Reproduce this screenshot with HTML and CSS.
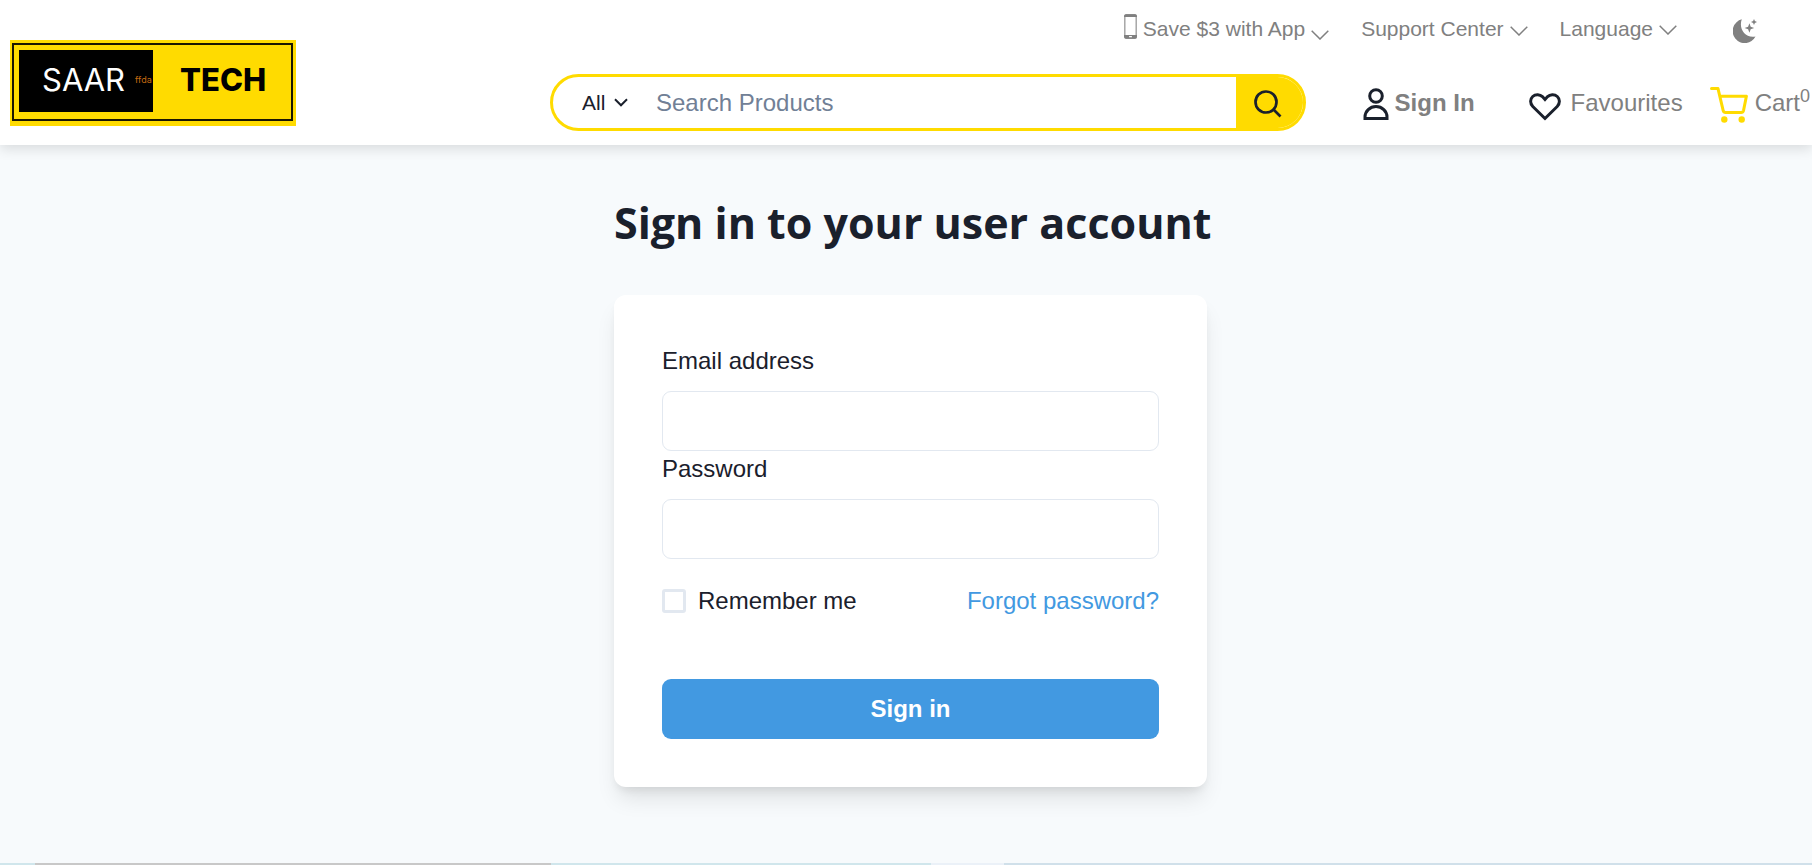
FILE: index.html
```html
<!DOCTYPE html>
<html lang="en">
<head>
<meta charset="utf-8">
<meta name="viewport" content="width=device-width, initial-scale=1">
<title>Saar Tech - Sign in</title>
<link rel="stylesheet" href="styles.css">
</head>
<body>
<header class="header">
  <a class="logo" href="#" aria-label="Saar Tech">
    <span class="logo-frame">
      <span class="logo-saar">SAAR<small class="logo-note">ffda</small></span>
      <span class="logo-tech">TECH</span>
    </span>
  </a>
  <div class="header-content">
    <nav class="top-nav" aria-label="Help">
      <a class="top-link" href="#">
        <svg class="icon-phone" width="13" height="25" viewBox="0 0 13 25"><rect x=".8" y=".8" width="11.4" height="23.4" rx="1.8" fill="none" stroke="#a0a0a0" stroke-width="1.4"/><path d="M2 .3h9a2 2 0 0 1 2 2V3H0v-.7a2 2 0 0 1 2-2zM0 21h13v1.700a2 2 0 0 1-2 2H2a2 2 0 0 1-2-2z" fill="#808080"/><rect x="5" y="22" width="3" height="1.300" rx=".6" fill="#fff"/></svg>
        <span>Save $3 with App</span>
        <svg class="chevron chevron-low" width="18" height="10" viewBox="0 0 18 10"><path d="M.7.700 9 9 17.300.700"/></svg>
      </a>
      <a class="top-link" href="#">
        <span>Support Center</span>
        <svg class="chevron" width="18" height="10" viewBox="0 0 18 10"><path d="M.7.700 9 9 17.300.700"/></svg>
      </a>
      <a class="top-link" href="#">
        <span>Language</span>
        <svg class="chevron chevron-high" width="18" height="10" viewBox="0 0 18 10"><path d="M.7.700 9 9 17.300.700"/></svg>
      </a>
      <button class="theme-toggle" type="button" aria-label="Toggle dark mode">
        <svg width="24" height="24" viewBox="0 0 24 24" fill="#808080"><path d="M8.800.300A12.100 12.100 0 1 0 22.500 17.600C11.500 19.500 5.500 9 8.800.300z"/><path d="M16.400 4.200 17.700 7.700 21.200 9 17.700 10.300 16.400 13.800 15.100 10.300 11.600 9 15.100 7.700zM21 0l.9 2.100 2.100.9-2.100.9-.9 2.100-.9-2.100L18 3l2.100-.9z"/></svg>
      </button>
    </nav>
    <div class="main-nav">
      <form class="search" role="search">
        <div class="category">
          <select class="category-select" aria-label="Category"><option>All</option></select>
          <svg class="category-arrow" width="14" height="9" viewBox="0 0 14 9"><path d="m1 1.300 6 6 6-6"/></svg>
        </div>
        <input class="search-input" type="search" placeholder="Search Products" aria-label="Search Products">
        <button class="search-button" type="submit" aria-label="Search">
          <svg width="28" height="28" viewBox="0 0 28 28" fill="none" stroke="#1a202c" stroke-width="2.700"><circle cx="12" cy="12" r="10.500"/><path d="m19.500 19.500 7 7"/></svg>
        </button>
      </form>
      <a class="nav-link nav-signin" href="#">
        <svg width="26" height="32" viewBox="0 0 26 32" fill="none" stroke="#1a202c" stroke-width="3"><circle cx="13" cy="8" r="6.300"/><path d="M2 30.500v-1.500a11 10.500 0 0 1 22 0v1.500z"/></svg>
        <span>Sign In</span>
      </a>
      <a class="nav-link nav-favourites" href="#">
        <svg width="32" height="28" viewBox="0 0 32 28" fill="none" stroke="#1a202c" stroke-width="3"><path d="M16 25.500 3.800 13.500C.8 10.500 1 6 3.700 3.500 6.600.800 11 1.200 13.400 3.600L16 6.500l2.600-2.900C21 1.200 25.400.800 28.300 3.500 31 6 31.200 10.500 28.200 13.500z"/></svg>
        <span>Favourites</span>
      </a>
      <a class="nav-link nav-cart" href="#">
        <svg width="38" height="36" viewBox="0 0 38 36" fill="none" stroke="#ffdb00" stroke-width="3" stroke-linecap="round" stroke-linejoin="round"><path d="M1.500 1.600H8l5.200 22a2.500 2.500 0 0 0 2.400 1.900h15.500a2.500 2.500 0 0 0 2.400-1.900L36.400 9.300H10"/><circle cx="14.300" cy="32.500" r="3.200" fill="#ffdb00" stroke="none"/><circle cx="31.700" cy="32.500" r="3.200" fill="#ffdb00" stroke="none"/></svg>
        <span>Cart<sup class="cart-count">0</sup></span>
      </a>
    </div>
  </div>
</header>
<main class="page">
  <div class="account">
    <h1 class="title">Sign in to your user account</h1>
    <form class="card">
      <label class="label" for="email">Email address</label>
      <input class="field" id="email" type="email">
      <label class="label" for="password">Password</label>
      <input class="field" id="password" type="password">
      <div class="options">
        <label class="remember"><input class="checkbox" type="checkbox">Remember me</label>
        <a class="forgot" href="#">Forgot password?</a>
      </div>
      <button class="submit" type="submit">Sign in</button>
    </form>
  </div>
</main>
<footer class="strip">
  <span class="strip-pale"></span><span class="strip-grey"></span><span class="strip-aqua"></span><span class="strip-light"></span><span class="strip-blue"></span>
</footer>
</body>
</html>
```
FILE: styles.css
```css
* { box-sizing: border-box; }

body {
  margin: 0;
  min-height: 100vh;
  display: flex;
  flex-direction: column;
  overflow-x: hidden;
  background: #f7fafc;
  color: #1a202c;
  font: 24px/36px "Liberation Sans", Arial, sans-serif;
}

a { color: inherit; text-decoration: none; }
svg { display: block; flex: none; }
button, input, select { font: inherit; color: inherit; }

.header {
  display: flex;
  gap: 254px;
  padding: 0 2px 14px 10px;
  background: #fff;
  box-shadow: 0 4px 12px rgba(0, 0, 0, .12);
}

.logo {
  flex: none;
  width: 286px;
  height: 86px;
  margin-top: 40px;
  padding: 3px 3px 5px 2px;
  background: #ffdb00;
}
.logo-frame {
  display: flex;
  height: 100%;
  padding: 5px;
  border: 2px solid #1a1600;
  font: 31px/60px Inter, sans-serif;
}
.logo-saar {
  flex: none;
  display: flex;
  gap: 10px;
  width: 134px;
  margin-bottom: 2px;
  padding-left: 23px;
  overflow: hidden;
  background: #000;
  color: #fff;
}
.logo-note { color: #c46a10; font-size: 9px; }
.logo-tech {
  flex: 1;
  padding-left: 27px;
  color: #000;
  font-weight: 800;
}

.header-content { flex: 1; min-width: 0; }

.top-nav {
  display: flex;
  justify-content: flex-end;
  height: 74px;
  padding: 13px 53px 0 0;
  color: #808080;
  font-size: 21px;
  line-height: 32px;
}
.top-link {
  display: flex;
  align-items: center;
  gap: 6px;
  height: 32px;
  margin-right: 32px;
}
.icon-phone { margin-top: -5px; }
.chevron { fill: none; stroke: #808080; stroke-width: 1.5; margin-top: 4px; }
.chevron-low { margin-top: 11px; }
.chevron-high { margin-top: 2px; }
.theme-toggle {
  height: 24px;
  margin: 6px 0 0 24px;
  padding: 0;
  border: 0;
  background: none;
}

.main-nav {
  display: flex;
  align-items: center;
  color: #808080;
}
.search {
  flex: 1;
  min-width: 0;
  display: flex;
  height: 57px;
  margin-right: 57px;
  overflow: hidden;
  border: 3px solid #ffdb00;
  border-radius: 29px;
  color: #1a202c;
}
.category { position: relative; width: 103px; }
.category-select {
  width: 100%;
  height: 100%;
  padding: 0 0 0 29px;
  border: 0;
  appearance: none;
  background: none;
  font-size: 21px;
}
.category-arrow {
  position: absolute;
  top: 21px;
  right: 28px;
  fill: none;
  stroke: #1a202c;
  stroke-width: 2;
  pointer-events: none;
}
.search-input {
  flex: 1;
  min-width: 0;
  padding: 0;
  border: 0;
  outline: 0;
  appearance: none;
  background: none;
}
.search-input::placeholder { color: #718096; opacity: 1; }
.search-button {
  width: 67px;
  padding: 3px 0 0 18px;
  border: 0;
  background: #ffdb00;
}

.nav-link { display: flex; align-items: center; white-space: nowrap; }
.nav-signin { gap: 6px; margin-right: 54px; font-weight: 700; }
.nav-signin svg { margin-top: 2px; }
.nav-favourites { gap: 10px; margin-right: 27px; }
.nav-favourites svg { margin-top: 8px; }
.nav-cart { gap: 7px; }
.nav-cart svg { margin-top: 4px; }
.cart-count { font-size: 18px; line-height: 0; }

.page {
  flex: 1;
  display: flex;
  justify-content: center;
  padding: 51px 0 76px 9px;
}
.account { width: 593px; }
.title {
  margin: 0 0 45px;
  font: 700 43px/54px "Open Sans", "Noto Sans", sans-serif;
  text-align: center;
  white-space: nowrap;
}
.card {
  padding: 48px;
  border-radius: 12px;
  background: #fff;
  box-shadow: 0 15px 22px -4px rgba(0, 0, 0, .1), 0 6px 9px -3px rgba(0, 0, 0, .08);
}
.label { display: block; margin-bottom: 12px; }
.field {
  display: block;
  width: 100%;
  height: 60px;
  padding: 0 24px;
  border: 1px solid #e2e8f0;
  border-radius: 9px;
  background: #fff;
}
.options {
  display: flex;
  justify-content: space-between;
  margin: 24px 0 60px;
}
.remember { display: flex; align-items: center; gap: 12px; }
.checkbox {
  width: 24px;
  height: 24px;
  margin: 0;
  appearance: none;
  border: 3px solid #e2e8f0;
  border-radius: 3px;
}
.checkbox:checked { background: #4299e1; }
.forgot { color: #4299e1; }
.submit {
  width: 100%;
  height: 60px;
  border: 0;
  border-radius: 9px;
  background: #4299e1;
  color: #fff;
  font-weight: 700;
}

.strip {
  display: grid;
  grid-template-columns: 35fr 516fr 380fr 73fr 808fr;
  height: 2px;
}
.strip-pale, .strip-aqua { background: #d0e6ec; }
.strip-grey { background: #c8c8c8; }
.strip-light { background: #ebf1f8; }
.strip-blue { background: #d0e0ea; }
```
